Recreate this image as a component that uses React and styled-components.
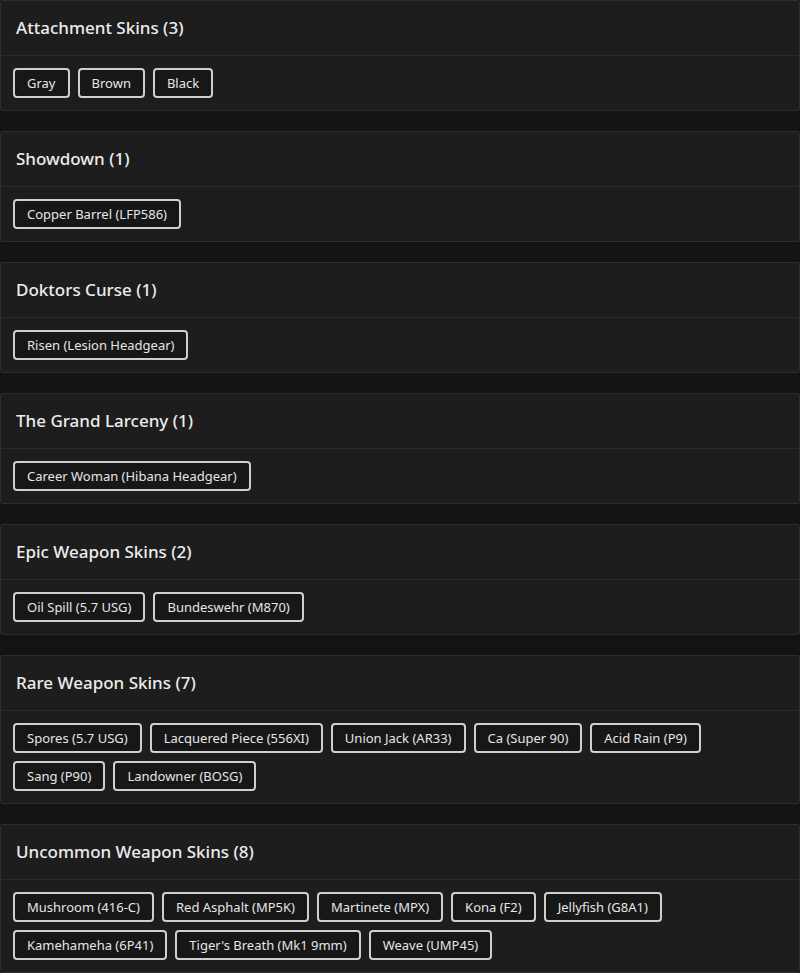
import styled, { createGlobalStyle } from "styled-components";

const GlobalStyle = createGlobalStyle`
  html, body {
    margin: 0;
    padding: 0;
    background: #131313;
  }
  body {
    font-family: "Noto Sans", "Open Sans", sans-serif;
    color: #e8e8e8;
  }
`;

const groups = [
  { title: "Attachment Skins", items: ["Gray", "Brown", "Black"] },
  { title: "Showdown", items: ["Copper Barrel (LFP586)"] },
  { title: "Doktors Curse", items: ["Risen (Lesion Headgear)"] },
  { title: "The Grand Larceny", items: ["Career Woman (Hibana Headgear)"] },
  { title: "Epic Weapon Skins", items: ["Oil Spill (5.7 USG)", "Bundeswehr (M870)"] },
  {
    title: "Rare Weapon Skins",
    items: [
      "Spores (5.7 USG)",
      "Lacquered Piece (556XI)",
      "Union Jack (AR33)",
      "Ca (Super 90)",
      "Acid Rain (P9)",
      "Sang (P90)",
      "Landowner (BOSG)",
    ],
  },
  {
    title: "Uncommon Weapon Skins",
    items: [
      "Mushroom (416-C)",
      "Red Asphalt (MP5K)",
      "Martinete (MPX)",
      "Kona (F2)",
      "Jellyfish (G8A1)",
      "Kamehameha (6P41)",
      "Tiger's Breath (Mk1 9mm)",
      "Weave (UMP45)",
    ],
  },
];

const App = () => {
  return (
    <>
      <GlobalStyle />
      <Page>
        {groups.map(group => (
          <Card key={group.title}>
            <CardHeader>
              {group.title} ({group.items.length})
            </CardHeader>
            <CardBody>
              {group.items.map(item => (
                <Chip key={item} type={"button"}>
                  {item}
                </Chip>
              ))}
            </CardBody>
          </Card>
        ))}
      </Page>
    </>
  );
};

export default App;

const Page = styled.div`
  display: flex;
  flex-direction: column;
  gap: 20px;
`;

const Card = styled.section`
  background: #1d1d1d;
  border: 1px solid #2c2c2c;
  border-radius: 2px;
`;

const CardHeader = styled.h3`
  margin: 0;
  height: 55px;
  box-sizing: border-box;
  display: flex;
  align-items: center;
  padding: 0 15px 2px;
  font-size: 17px;
  font-weight: 500;
  color: #ececec;
  border-bottom: 1px solid #2c2c2c;
`;

const CardBody = styled.div`
  display: flex;
  flex-wrap: wrap;
  gap: 8px;
  padding: 12px;
`;

const Chip = styled.button`
  height: 30px;
  padding: 0 12px;
  background: #171717;
  border: 2px solid #cfcfcf;
  border-radius: 4px;
  color: #e6e6e6;
  font-family: inherit;
  font-size: 13px;
  cursor: pointer;
`;
